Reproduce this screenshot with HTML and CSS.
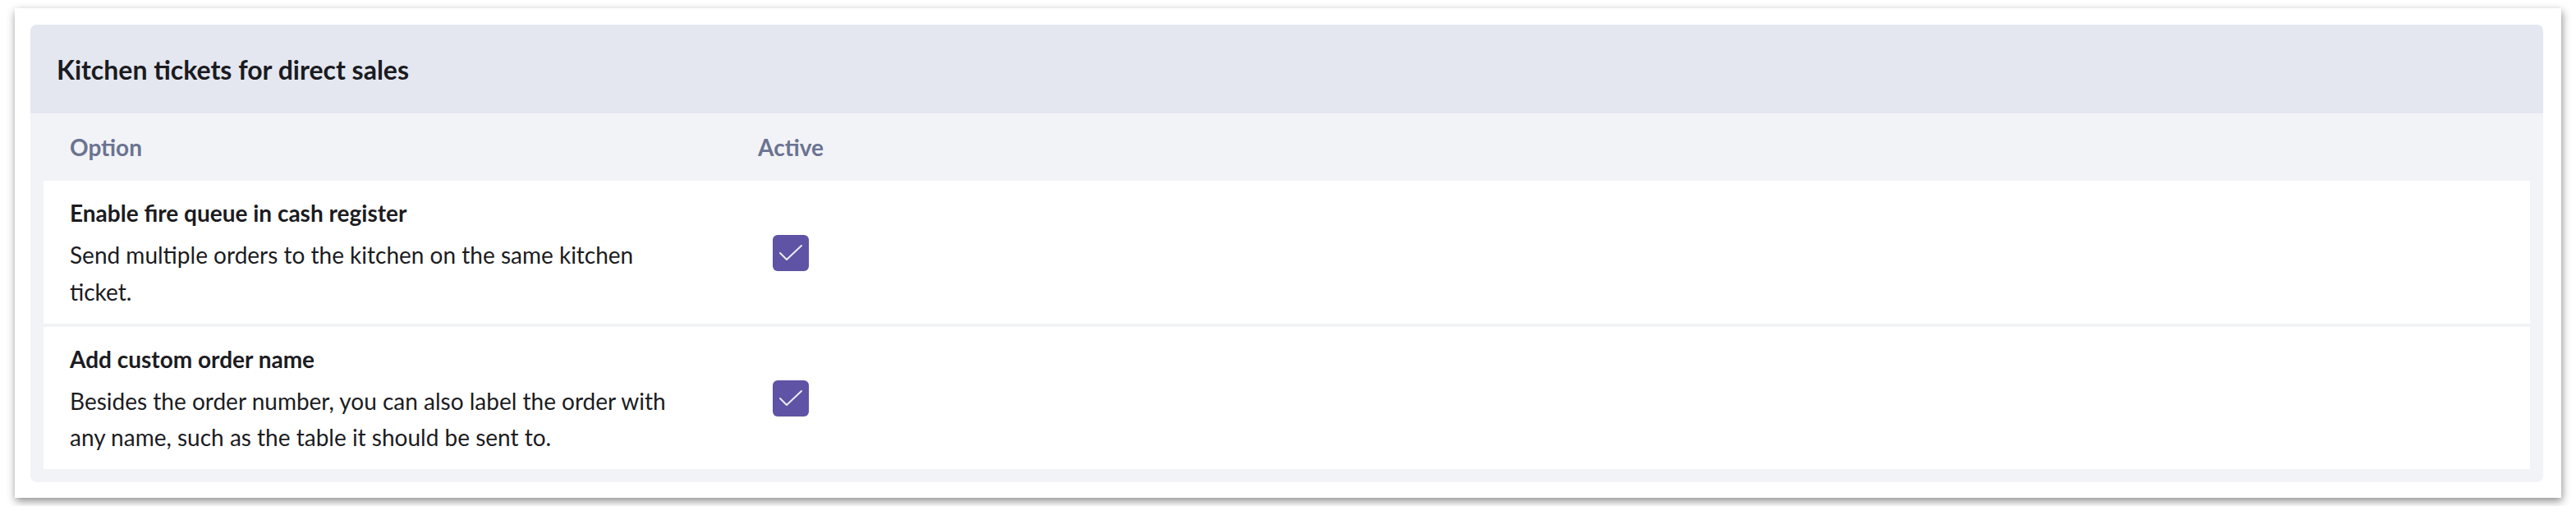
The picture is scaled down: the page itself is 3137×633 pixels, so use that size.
FILE: index.html
```html
<!DOCTYPE html>
<html lang="en">
<head>
  <meta charset="UTF-8">
  <meta name="viewport" content="width=device-width, initial-scale=1.0">
  <title>Kitchen tickets</title>
  <link rel="stylesheet" href="styles.css">
</head>
<body>
  <div class="card">
    <div class="panel">
      <div class="panel-header">
        <h2>Kitchen tickets for direct sales</h2>
      </div>

      <div class="table-head">
        <div class="col-option">Option</div>
        <div class="col-active">Active</div>
      </div>

      <div class="rows">
        <div class="row">
          <div class="col-option">
            <div class="option-title">Enable fire queue in cash register</div>
            <div class="option-desc">Send multiple orders to the kitchen on the same kitchen ticket.</div>
          </div>
          <div class="col-active">
            <span class="checkbox">
              <svg width="44" height="44" viewBox="0 0 44 44"><polyline points="9,22 17,30 35,13" fill="none" stroke="#ecebf6" stroke-width="2" stroke-linecap="round" stroke-linejoin="round"/></svg>
            </span>
          </div>
        </div>

        <div class="row">
          <div class="col-option">
            <div class="option-title">Add custom order name</div>
            <div class="option-desc">Besides the order number, you can also label the order with any name, such as the table it should be sent to.</div>
          </div>
          <div class="col-active">
            <span class="checkbox">
              <svg width="44" height="44" viewBox="0 0 44 44"><polyline points="9,22 17,30 35,13" fill="none" stroke="#ecebf6" stroke-width="2" stroke-linecap="round" stroke-linejoin="round"/></svg>
            </span>
          </div>
        </div>
      </div>
    </div>
  </div>
</body>
</html>
```

FILE: styles.css
```css
body {
  margin: 0;
  font-family: Lato, "Open Sans", sans-serif;
  background-color: #fff;
  color: #1c1c1f;
}
.card {
  margin: 10px 18px;
  padding: 20px 22px 19px 19px;
  background: white;
  box-shadow: 1px 4px 10px rgba(0, 0, 0, 0.45);
}
.panel {
  background: #f2f3f7;
  border-radius: 8px;
  overflow: hidden;
  padding-bottom: 16px;
}
.panel-header {
  background: #e4e7f0;
  height: 108px;
  display: flex;
  align-items: center;
  padding: 0 32px;
}
.panel-header h2 {
  margin: 0;
  font-size: 32px;
  font-weight: 700;
  color: #1b1b1f;
}
.table-head,
.row {
  display: grid;
  grid-template-columns: 868px 84px 1fr;
  align-items: center;
}
.table-head {
  height: 82px;
  padding: 0 16px;
  font-size: 28px;
  font-weight: 700;
  color: #6b7391;
}
.col-option {
  padding-left: 32px;
}
.col-active {
  text-align: center;
}
.rows {
  display: flex;
  flex-direction: column;
  gap: 4px;
  padding: 0 16px;
}
.row {
  background: white;
  padding: 18px 0 16px;
}
.option-title {
  font-size: 28px;
  font-weight: 700;
  line-height: 42px;
  margin-bottom: 8px;
}
.option-desc {
  font-size: 28px;
  line-height: 44.8px;
  max-width: 760px;
}
.checkbox {
  display: inline-block;
  width: 44px;
  height: 44px;
  border-radius: 6px;
  background: #5f53a5;
  vertical-align: middle;
}
.checkbox svg {
  display: block;
}
```
